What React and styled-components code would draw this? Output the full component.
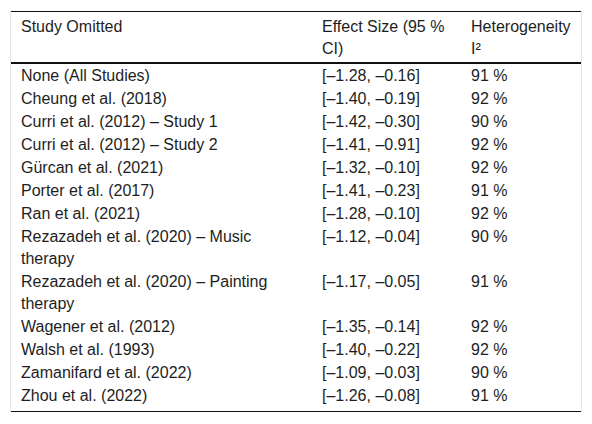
import React from "react";
import styled, { createGlobalStyle } from "styled-components";

const Global = createGlobalStyle`
  html, body { margin: 0; padding: 0; background: #fff; }
  body { font-family: "Liberation Sans", Arial, sans-serif; }
`;

const Frame = styled.div`
  margin: 11px 10px 0;
  width: 572px;
  box-sizing: border-box;
  border-left: 1px solid #e4e4e4;
  border-right: 1px solid #e4e4e4;
`;

const Table = styled.table`
  width: 100%;
  border-collapse: collapse;
  table-layout: fixed;
  font-size: 16px;
  line-height: 22px;
  color: #1e1e1e;
  border-top: 1px solid #111;
  border-bottom: 1px solid #111;
`;

const Th = styled.th`
  text-align: left;
  font-weight: normal;
  vertical-align: top;
  padding: 4px 8px 2px 10px;
  border-bottom: 2px solid #111;
`;

const Td = styled.td`
  vertical-align: top;
  padding: 0.5px 8px 0.5px 10px;
  tr:last-child > & {
    padding-bottom: 4px;
  }
`;

const rows = [
  ["None (All Studies)", "[–1.28, –0.16]", "91 %"],
  ["Cheung et al. (2018)", "[–1.40, –0.19]", "92 %"],
  ["Curri et al. (2012) – Study 1", "[–1.42, –0.30]", "90 %"],
  ["Curri et al. (2012) – Study 2", "[–1.41, –0.91]", "92 %"],
  ["Gürcan et al. (2021)", "[–1.32, –0.10]", "92 %"],
  ["Porter et al. (2017)", "[–1.41, –0.23]", "91 %"],
  ["Ran et al. (2021)", "[–1.28, –0.10]", "92 %"],
  ["Rezazadeh et al. (2020) – Music therapy", "[–1.12, –0.04]", "90 %"],
  ["Rezazadeh et al. (2020) – Painting therapy", "[–1.17, –0.05]", "91 %"],
  ["Wagener et al. (2012)", "[–1.35, –0.14]", "92 %"],
  ["Walsh et al. (1993)", "[–1.40, –0.22]", "92 %"],
  ["Zamanifard et al. (2022)", "[–1.09, –0.03]", "90 %"],
  ["Zhou et al. (2022)", "[–1.26, –0.08]", "91 %"],
];

export default function App() {
  return (
    <>
      <Global />
      <Frame>
        <Table>
          <colgroup>
            <col style={{ width: 301 }} />
            <col style={{ width: 149 }} />
            <col />
          </colgroup>
          <thead>
            <tr>
              <Th>Study Omitted</Th>
              <Th>Effect Size (95 % CI)</Th>
              <Th>Heterogeneity I²</Th>
            </tr>
          </thead>
          <tbody>
            {rows.map((r) => (
              <tr key={r[0]}>
                <Td>{r[0]}</Td>
                <Td>{r[1]}</Td>
                <Td>{r[2]}</Td>
              </tr>
            ))}
          </tbody>
        </Table>
      </Frame>
    </>
  );
}
